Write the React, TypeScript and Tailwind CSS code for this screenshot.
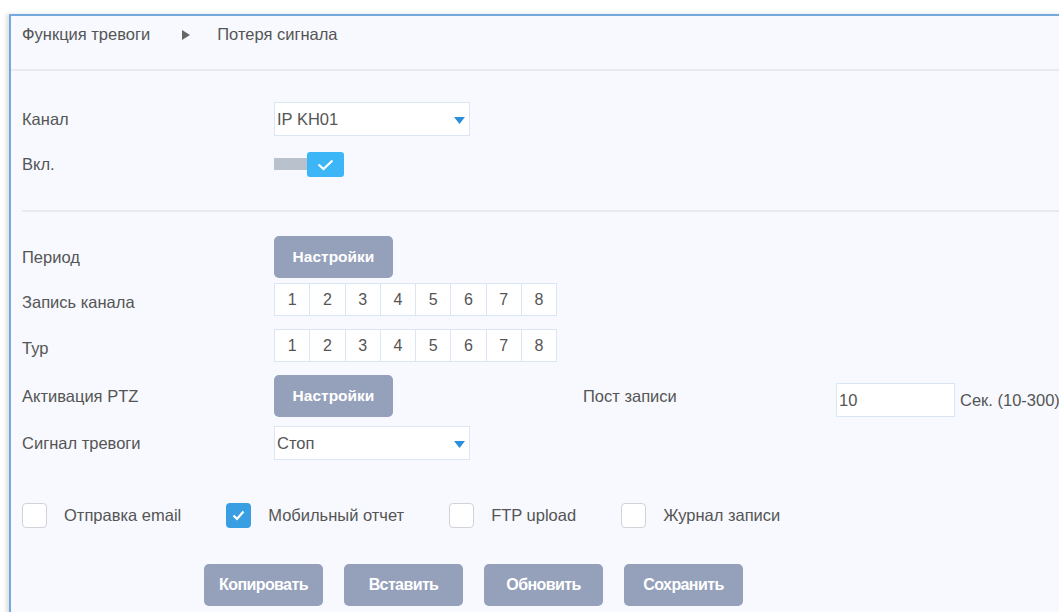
import { useState } from 'react';

const font = { fontFamily: '"Liberation Sans", Arial, sans-serif' };

const Label = ({ children }: { children: React.ReactNode }) => (
  <div className="w-[252px] shrink-0 text-[16.5px] text-[#555]">{children}</div>
);

const Select = ({ value }: { value: string }) => (
  <div className="relative flex h-[34px] w-[196px] items-center border border-[#dbe6f5] bg-white pl-[2px] text-[16.5px] text-[#555]">
    {value}
    <svg className="absolute right-[4px] top-[14px]" width="11" height="7" viewBox="0 0 11 7">
      <path d="M0 0h11L5.5 7z" fill="#2b90d9" />
    </svg>
  </div>
);

const GrayButton = ({ children, className = '' }: { children: React.ReactNode; className?: string }) => (
  <button
    className={`flex h-[42px] w-[119px] items-center justify-center rounded-[5px] bg-[#95a0bb] text-white ${className}`}
  >
    {children}
  </button>
);

const Cells = () => (
  <div className="flex h-[33px] border-l border-[#dbe6f4] bg-white">
    {[1, 2, 3, 4, 5, 6, 7, 8].map((n) => (
      <div
        key={n}
        className="flex w-[35.25px] items-center justify-center border-y border-r border-[#dbe6f4] text-[16px] text-[#555]"
      >
        {n}
      </div>
    ))}
  </div>
);

const Check = ({ on }: { on?: boolean }) =>
  on ? (
    <div className="flex h-[25px] w-[25px] items-center justify-center rounded-[4px] bg-[#3a9fe2]">
      <svg width="13" height="11" viewBox="0 0 13 11">
        <path d="M1.5 5.5l3.5 3.5L11.5 1.5" fill="none" stroke="white" strokeWidth="2.2" />
      </svg>
    </div>
  ) : (
    <div className="h-[25px] w-[25px] rounded-[4px] border border-[#d0d4da] bg-white" />
  );

export default function App() {
  const [enabled] = useState(true);

  const notify = [
    { label: 'Отправка email', on: false },
    { label: 'Мобильный отчет', on: true },
    { label: 'FTP upload', on: false },
    { label: 'Журнал записи', on: false },
  ];

  return (
    <div className="h-[612px] w-[1059px] overflow-hidden bg-white pl-[9px] pt-[14px]" style={font}>
      <div className="h-[700px] w-[1100px] border-l-2 border-t-2 border-[#74a9dc] bg-[#f7f9fe] shadow-[-3px_0_4px_rgba(0,0,0,0.12)]">
        {/* breadcrumb */}
        <div className="flex h-[37px] items-center pl-[11px] text-[16.5px] text-[#555]">
          <span>Функция тревоги</span>
          <svg className="ml-[32px] mr-[27px]" width="8" height="10" viewBox="0 0 8 10">
            <path d="M0 0l8 5-8 5z" fill="#666" />
          </svg>
          <span>Потеря сигнала</span>
        </div>
        <div className="mt-[16px] h-[2px] bg-[#e9eaee]" />

        <div className="pl-[11px]">
          <div className="mt-[31px] flex items-center">
            <Label>Канал</Label>
            <Select value="IP KH01" />
          </div>
          <div className="mt-[16px] flex h-[25px] items-center">
            <Label>Вкл.</Label>
            <div className="relative h-[25px] w-[70px]">
              <div className="absolute left-0 top-[6px] h-[12px] w-[36px] bg-[#b9c1cc]" />
              {enabled && (
                <div className="absolute left-[33px] top-0 flex h-[25px] w-[37px] items-center justify-center rounded-[3px] bg-[#3db6f7]">
                  <svg width="17" height="12" viewBox="0 0 17 12">
                    <path d="M1.5 5.5l5 4.5 9-8.5" fill="none" stroke="white" strokeWidth="2.2" />
                  </svg>
                </div>
              )}
            </div>
          </div>
          <div className="mt-[33px] h-[2px] bg-[#e9eaee]" />

          <div className="mt-[24px] flex items-center">
            <Label>Период</Label>
            <GrayButton className="text-[15.5px] font-bold">Настройки</GrayButton>
          </div>
          <div className="mt-[5px] flex items-center">
            <Label><span className="relative top-[3px]">Запись канала</span></Label>
            <Cells />
          </div>
          <div className="mt-[13px] flex items-center">
            <Label><span className="relative top-[3px]">Тур</span></Label>
            <Cells />
          </div>
          <div className="mt-[13px] flex items-center">
            <Label>Активация PTZ</Label>
            <div className="w-[309px] shrink-0">
              <GrayButton className="text-[15.5px] font-bold">Настройки</GrayButton>
            </div>
            <div className="w-[253px] shrink-0 text-[16.5px] text-[#555]">Пост записи</div>
            <div className="relative top-[4px] flex items-center">
              <div className="flex h-[34px] w-[119px] items-center border border-[#dbe6f5] bg-white pl-[2px] text-[16.5px] text-[#555]">
                10
              </div>
              <span className="ml-[5px] whitespace-nowrap text-[16.5px] text-[#555]">Сек. (10-300)</span>
            </div>
          </div>
          <div className="mt-[9px] flex items-center">
            <Label>Сигнал тревоги</Label>
            <Select value="Стоп" />
          </div>

          <div className="mt-[43px] flex items-center">
            {notify.map((n) => (
              <div key={n.label} className="mr-[45px] flex items-center">
                <Check on={n.on} />
                <span className="ml-[17px] text-[16.5px] text-[#555]">{n.label}</span>
              </div>
            ))}
          </div>

          <div className="ml-[182px] mt-[36px] flex gap-[21px]">
            {['Копировать', 'Вставить', 'Обновить', 'Сохранить'].map((b) => (
              <GrayButton key={b} className="text-[16px] font-bold tracking-[-0.6px]">
                {b}
              </GrayButton>
            ))}
          </div>
        </div>
      </div>
    </div>
  );
}
